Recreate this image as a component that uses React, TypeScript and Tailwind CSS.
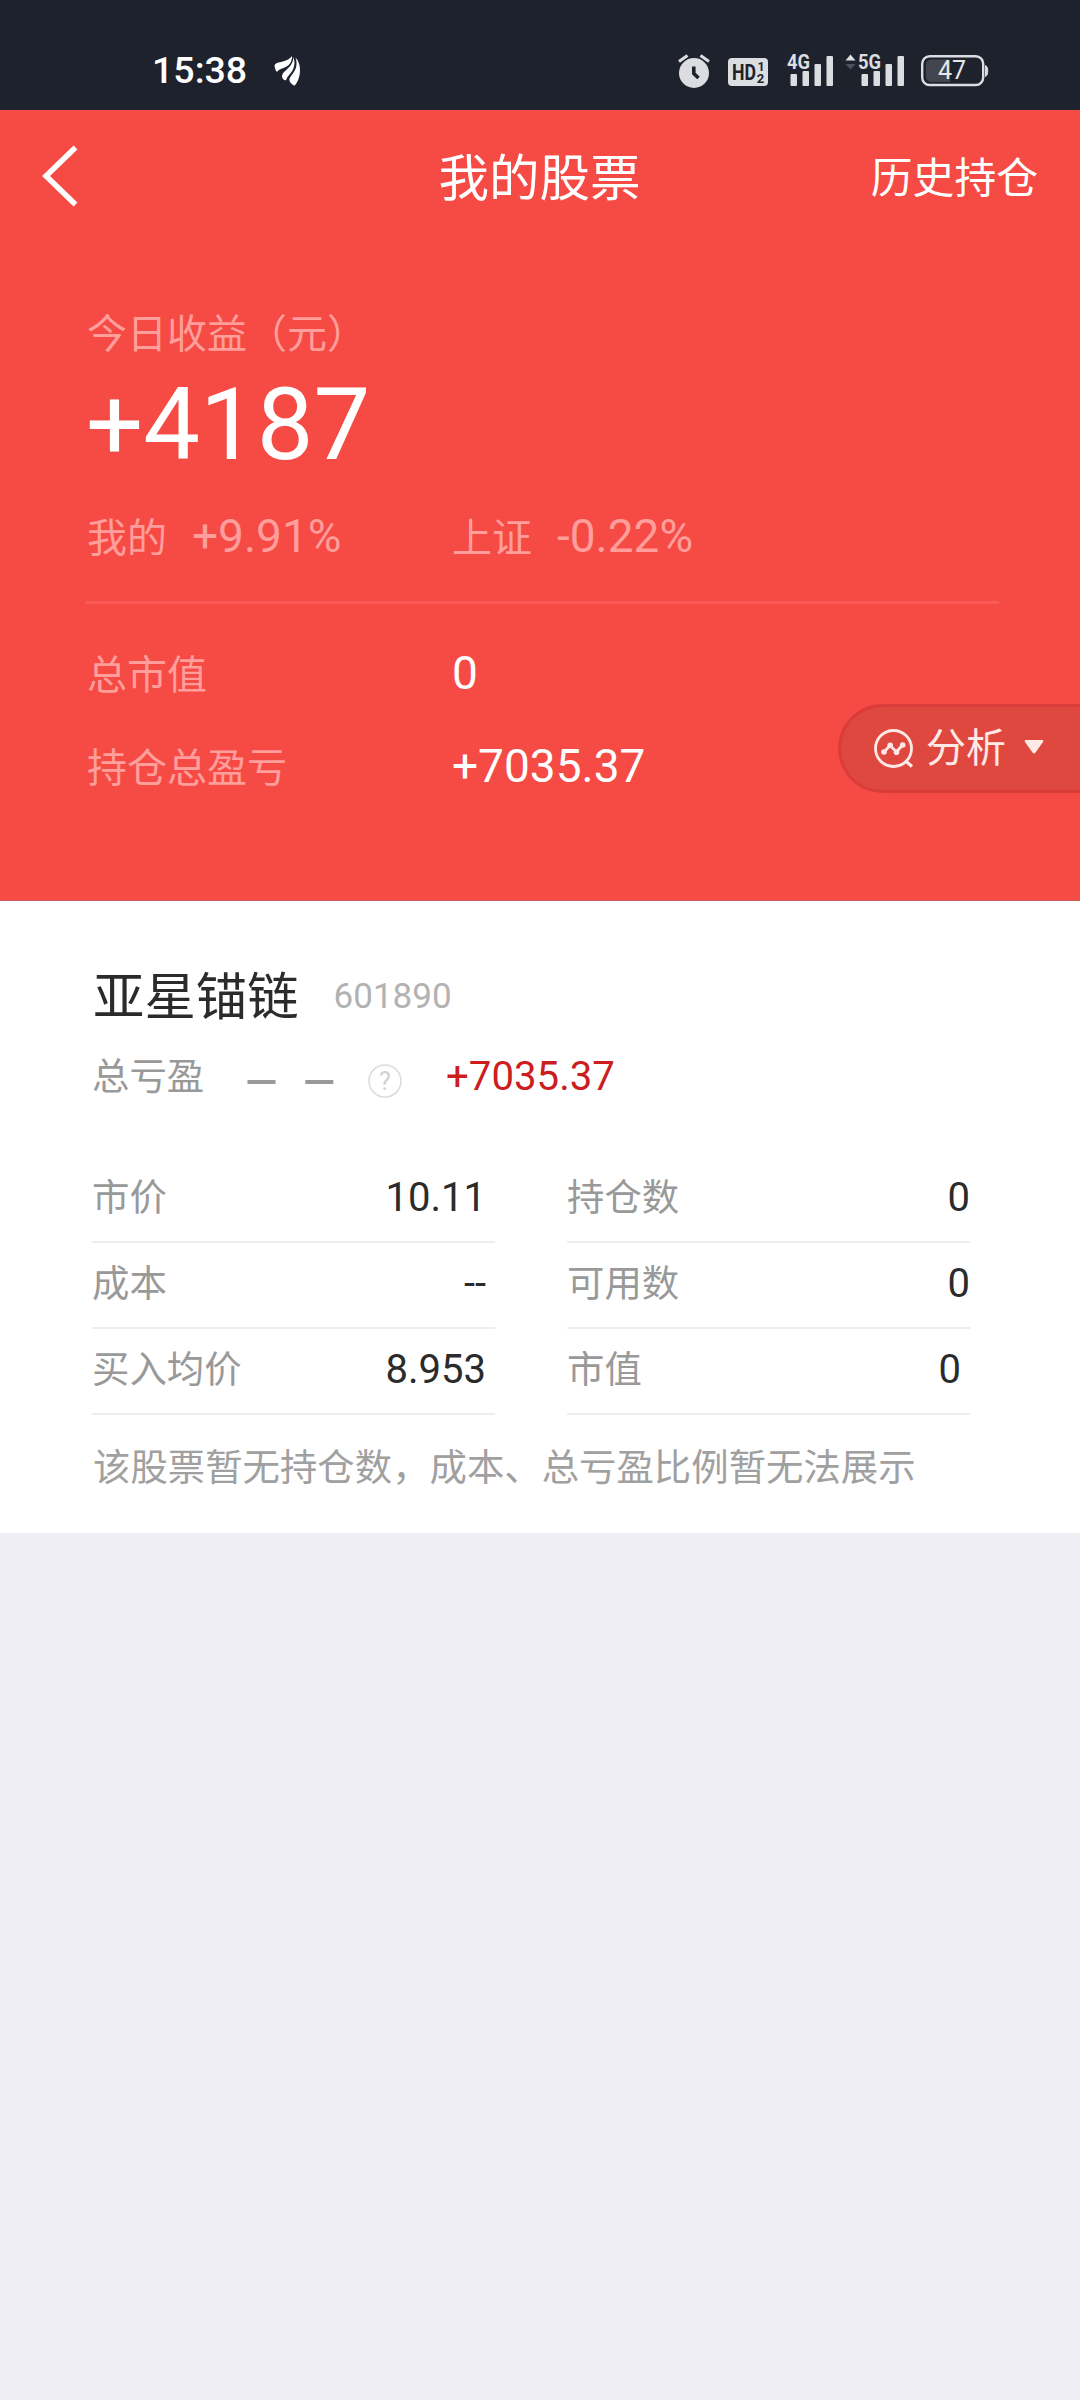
import React from 'react';

type Cell = { label: string; value: string; inset?: boolean };

const leftCells: Cell[] = [
  { label: '市价', value: '10.11', inset: true },
  { label: '成本', value: '--', inset: true },
  { label: '买入均价', value: '8.953', inset: true },
];

const rightCells: Cell[] = [
  { label: '持仓数', value: '0' },
  { label: '可用数', value: '0' },
  { label: '市值', value: '0', inset: true },
];

function FeatherIcon() {
  return (
    <svg width="28" height="36" viewBox="0 0 28 36" fill="#fff">
      <path d="M18 3C16 6 12 8 7 9C3 9.500 1 10.500 .5 12.500C.8 15 1.500 17.500 3 19C5 15 12 16 16 10.500C17.500 8 18.200 5.500 18 3Z" />
      <path d="M19.300 3.800C19.600 10 15.500 14.500 10.500 18.500C8.500 20.500 7.600 22.500 8.200 24.500C9 26.500 10.500 27.500 12 27.200C13 23.500 16.500 21 18.800 17C21 12.500 21 8 19.300 3.800Z" />
      <path d="M21.500 4.500C24.500 7.500 26.200 12 26 18C25.800 24 23.500 29.500 20.500 32.800C17.500 31.500 15.300 29 15.300 26.500C16.500 22.500 20.500 19.500 22 14.500C22.900 11 22.600 7.500 21.500 4.500Z" />
    </svg>
  );
}

function AlarmIcon() {
  return (
    <svg width="34" height="36" viewBox="0 0 34 36" fill="none">
      <circle cx="17" cy="20" r="15" fill="#dcdde1" />
      <path d="M2 8.500L10.500 2.500M32 8.500L23.500 2.500" stroke="#dcdde1" strokeWidth="3" />
      <path d="M16.800 13.500V20.500L21.500 25" stroke="#1e222d" strokeWidth="3.600" />
    </svg>
  );
}

function HdIcon() {
  return (
    <svg width="40" height="36" viewBox="0 0 40 36" fill="#1e222d" fontFamily="Roboto, sans-serif" fontWeight="700">
      <rect x="0" y="5" width="40" height="28" rx="4" fill="#dcdde1" />
      <text x="4" y="27" fontSize="22.500" textLength="24" lengthAdjust="spacingAndGlyphs">HD</text>
      <text x="29.500" y="18" fontSize="12.500">1</text>
      <text x="28.800" y="30" fontSize="13">2</text>
    </svg>
  );
}

function SignalIcon({ label, arrows }: { label: string; arrows?: boolean }) {
  return (
    <svg
      className="overflow-visible"
      width={arrows ? 60 : 47}
      height="36"
      viewBox={arrows ? '-13 0 60 36' : '0 0 47 36'}
      fill="#dcdde1"
      fontFamily="Roboto, sans-serif"
      fontWeight="700"
    >
      {arrows && (
        <>
          <path d="M-12.500 7.500L-7.500 1.500L-2.500 7.500Z" />
          <path d="M-12.500 11L-7.500 16.500L-2.500 11Z" fill="#4d505a" />
        </>
      )}
      <text x="0" y="16" fontSize="19.500" textLength="23" lengthAdjust="spacingAndGlyphs">{label}</text>
      <rect x="3.500" y="21" width="6.500" height="12" rx="1" />
      <rect x="15.500" y="18" width="6.500" height="15" rx="1" />
      <rect x="27.500" y="11" width="6.500" height="22" rx="1" />
      <rect x="39.500" y="3" width="6.500" height="30" rx="1" />
    </svg>
  );
}

function BatteryIcon() {
  return (
    <svg width="68" height="36" viewBox="0 0 68 36" fill="none">
      <rect x="1.200" y="3.200" width="61" height="28.800" rx="7.500" stroke="#dcdde1" strokeWidth="2.400" />
      <path d="M29 6.500V29H10A5 5 0 0 1 5 24V11.500A5 5 0 0 1 10 6.500Z" fill="#43464f" />
      <path d="M64.500 12.500C67.500 13.500 67.500 22.500 64.500 23.500Z" fill="#dcdde1" stroke="#dcdde1" />
      <text x="31" y="26" textAnchor="middle" fontFamily="Roboto, sans-serif" fontSize="25" fill="#e6e6e9">47</text>
    </svg>
  );
}

function AnalysisIcon() {
  return (
    <svg width="40" height="40" viewBox="0 0 40 40" fill="none" stroke="#ffe9e7" strokeWidth="2.800">
      <circle cx="19.500" cy="19.500" r="18" />
      <path d="M31 31.500L38 37.500" strokeWidth="3.200" />
      <path d="M10 23L16 16.500L22.500 23L28.500 16" />
      <g fill="#ffe9e7" stroke="none">
        <circle cx="10" cy="23" r="2.800" />
        <circle cx="16.200" cy="16.300" r="2.800" />
        <circle cx="22.500" cy="23.200" r="2.800" />
        <circle cx="28.700" cy="16" r="2.800" />
      </g>
    </svg>
  );
}

function StatusBar() {
  return (
    <div className="flex h-[110px] items-center bg-[#1e222d] pt-8">
      <span className="ml-[152px] w-[122px] text-[37.5px] font-medium text-white">15:38</span>
      <FeatherIcon />
      <div className="mr-[91px] ml-auto flex items-center">
        <AlarmIcon />
        <div className="ml-[17px]"><HdIcon /></div>
        <div className="ml-[19px]"><SignalIcon label="4G" /></div>
        <div className="ml-[11px]"><SignalIcon label="5G" arrows /></div>
        <div className="ml-4"><BatteryIcon /></div>
      </div>
    </div>
  );
}

function CellColumn({ cells }: { cells: Cell[] }) {
  return (
    <div className="w-[403px]">
      {cells.map(cell => (
        <div
          key={cell.label}
          className={`flex h-[86px] items-center justify-between border-b-2 border-[#ededed] pb-[3px] ${
            cell.inset ? 'pr-[9px]' : ''
          }`}
        >
          <span className="pt-0.5 text-[37.4px] text-[#999]">{cell.label}</span>
          <span className="text-[40px] text-[#2b2b2b]">{cell.value}</span>
        </div>
      ))}
    </div>
  );
}

export default function App() {
  return (
    <div className="min-h-[2400px] w-[1080px] bg-[#efeef4] font-[Roboto,'Noto_Sans_CJK_SC',sans-serif] leading-none whitespace-nowrap">
      <StatusBar />

      <div className="relative h-[791px] border-b border-[#c9605c] bg-[#f64a45]">
        <div className="grid h-[136px] grid-cols-3 items-center pr-[42px] pl-[41px] text-white">
          <svg className="-mt-1" width="37" height="62" viewBox="0 0 37 62" fill="none" stroke="#fff" strokeWidth="5.500">
            <path d="M34.500 2.500L5 31L34.500 59.500" />
          </svg>
          <h1 className="pt-0.5 text-center text-[50.5px]">我的股票</h1>
          <span className="pt-0.5 text-right text-[41.8px]">历史持仓</span>
        </div>

        <div className="pt-[69px] pr-[81px] pl-[86px] text-[#ff9e9a]">
          <div className="pl-px text-[40px]">今日收益（元）</div>
          <div className="mt-[19px] h-[100px] text-[101px] text-white">+4187</div>
          <div className="mt-[39px] flex h-[46px] items-baseline pl-px text-[40px]">
            <div className="flex w-[365px] items-baseline gap-[25px]">
              <span>我的</span>
              <span className="text-[46px]">+9.91%</span>
            </div>
            <div className="flex items-baseline gap-[25px]">
              <span>上证</span>
              <span className="text-[46px]">-0.22%</span>
            </div>
          </div>
          <div className="mt-[42px] h-[3px] bg-[#fb5b56]" />
          <div className="mt-[46px] flex h-[46px] items-baseline pl-px">
            <span className="w-[365px] text-[40px]">总市值</span>
            <span className="text-[46px] text-white">0</span>
          </div>
          <div className="mt-[47px] flex h-[46px] items-baseline pl-px">
            <span className="w-[365px] text-[40px]">持仓总盈亏</span>
            <span className="text-[46px] text-white">+7035.37</span>
          </div>
        </div>

        {/* floating drawer handle, flush with the right edge */}
        <button className="absolute top-[594px] right-0 flex h-[89px] w-[242px] items-center rounded-l-full border-[3px] border-r-0 border-[#da3c3a] bg-[#df483f] pl-[33px] text-[#ffe9e7]">
          <AnalysisIcon />
          <span className="ml-3 text-[40px]">分析</span>
          <svg className="-mt-1 ml-[18px]" width="20" height="14" viewBox="0 0 20 14" fill="#ffe9e7">
            <path d="M1.500 0H18.500Q20 .5 19 2L11.500 12.500Q10 14.500 8.500 12.500L1 2Q0 .5 1.500 0Z" />
          </svg>
        </button>
      </div>

      <div className="bg-white px-[92px] pt-[70px] pb-[45px]">
        <div className="flex h-[51px] items-center pl-px">
          <span className="pt-0.5 text-[51.4px] text-[#2b2b2b]">亚星锚链</span>
          <span className="ml-[35px] text-[35px] text-[#b2b2b2]">601890</span>
        </div>

        <div className="mt-[35px] flex h-10 items-center">
          <span className="w-[153px] pt-0.5 text-[37.4px] text-[#999]">总亏盈</span>
          <span className="w-[123px] pt-3 text-[42px] font-medium tracking-[2px] text-[#999] [word-spacing:11px]">— —</span>
          <svg className="mt-2" width="34" height="34" viewBox="0 0 34 34" fill="none">
            <circle cx="17" cy="17" r="16" stroke="#dcdcdc" strokeWidth="1.600" />
            <text x="17" y="26" textAnchor="middle" fontSize="25" fill="#d2d2d2">?</text>
          </svg>
          <span className="ml-11 pt-px text-[40.2px] text-[#cc1e1e]">+7035.37</span>
        </div>

        <div className="mt-[60px] flex gap-[72px]">
          <CellColumn cells={leftCells} />
          <CellColumn cells={rightCells} />
        </div>

        <p className="mt-[35px] h-[38px] pl-px text-[37.4px] text-[#a0a0a0]">
          该股票暂无持仓数，成本、总亏盈比例暂无法展示
        </p>
      </div>
    </div>
  );
}
